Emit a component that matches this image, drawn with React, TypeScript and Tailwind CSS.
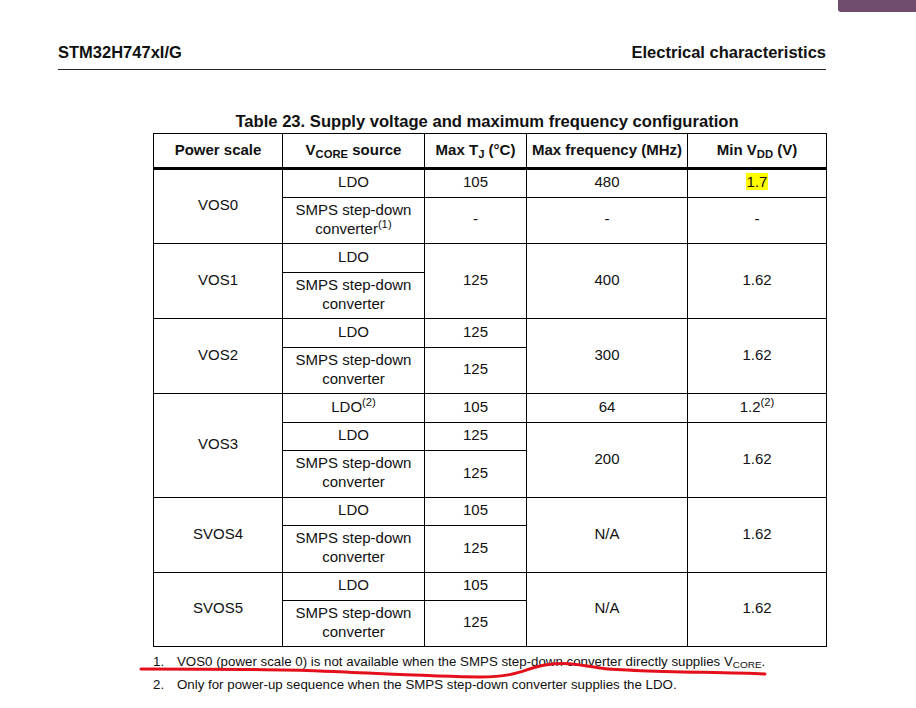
import React from 'react';

type Cell = {
  text: React.ReactNode;
  span?: string;
};

// body cells in row-major order, the grid auto-places them around the row spans
const bodyCells: Cell[] = [
  { text: 'VOS0', span: 'row-span-2' },
  { text: 'LDO' },
  { text: '105' },
  { text: '480' },
  { text: <span className="bg-[#ffff00] px-px">1.7</span> },
  { text: <>SMPS step-down<br />converter<sup>(1)</sup></> },
  { text: '-' },
  { text: '-' },
  { text: '-' },

  { text: 'VOS1', span: 'row-span-2' },
  { text: 'LDO' },
  { text: '125', span: 'row-span-2' },
  { text: '400', span: 'row-span-2' },
  { text: '1.62', span: 'row-span-2' },
  { text: <>SMPS step-down<br />converter</> },

  { text: 'VOS2', span: 'row-span-2' },
  { text: 'LDO' },
  { text: '125' },
  { text: '300', span: 'row-span-2' },
  { text: '1.62', span: 'row-span-2' },
  { text: <>SMPS step-down<br />converter</> },
  { text: '125' },

  { text: 'VOS3', span: 'row-span-3' },
  { text: <>LDO<sup>(2)</sup></> },
  { text: '105' },
  { text: '64' },
  { text: <>1.2<sup>(2)</sup></> },
  { text: 'LDO' },
  { text: '125' },
  { text: '200', span: 'row-span-2' },
  { text: '1.62', span: 'row-span-2' },
  { text: <>SMPS step-down<br />converter</> },
  { text: '125' },

  { text: 'SVOS4', span: 'row-span-2' },
  { text: 'LDO' },
  { text: '105' },
  { text: 'N/A', span: 'row-span-2' },
  { text: '1.62', span: 'row-span-2' },
  { text: <>SMPS step-down<br />converter</> },
  { text: '125' },

  { text: 'SVOS5', span: 'row-span-2' },
  { text: 'LDO' },
  { text: '105' },
  { text: 'N/A', span: 'row-span-2' },
  { text: '1.62', span: 'row-span-2' },
  { text: <>SMPS step-down<br />converter</> },
  { text: '125' },
];

const headers: React.ReactNode[] = [
  'Power scale',
  <>V<sub>CORE</sub> source</>,
  <>Max T<sub>J</sub> (°C)</>,
  'Max frequency (MHz)',
  <>Min V<sub>DD</sub> (V)</>,
];

export default function App() {
  return (
    <div className="relative w-[916px] h-[708px] overflow-hidden bg-white text-[#111] font-['Liberation_Sans',Arial,sans-serif]">
      {/* viewer tab */}
      <div className="flex justify-end">
        <div className="w-[78px] h-[12px] bg-[#6f4b6d] rounded-bl-[3px]" />
      </div>

      <div className="pl-[58px] w-[827px]">
        {/* Page header */}
        <div className="mt-[30px] flex justify-between items-center pb-[7px] border-b border-[#222] w-[768px] text-[16.5px] leading-[20px] font-bold">
          <span>STM32H747xI/G</span>
          <span>Electrical characteristics</span>
        </div>

        <div className="ml-[95px] w-[674px]">
          <div className="mt-[42px] h-[21px] pr-[6px] text-center text-[16.6px] leading-[20px] font-bold whitespace-nowrap">
            Table 23. Supply voltage and maximum frequency configuration
          </div>

          {/* Header row */}
          <div className="grid grid-cols-[128px_141px_101px_160px_138px] grid-rows-[33px] gap-px bg-black pt-px px-px pb-[3px]">
            {headers.map((h, i) => (
              <div key={i} className="bg-white flex items-center justify-center pb-[2px] text-[15px] leading-[19px] font-bold">
                <span>{h}</span>
              </div>
            ))}
          </div>

          {/* Body */}
          <div className="grid grid-cols-[128px_141px_101px_160px_138px] grid-rows-[27px_45px_28px_45px_28px_45px_28px_27px_46px_27px_46px_27px_45px] gap-px bg-black px-px pb-px">
            {bodyCells.map((c, i) => (
              <div key={i} className={`bg-white flex items-center justify-center text-center pb-[4px] text-[15px] leading-[19px] ${c.span ?? ''}`}>
                <span>{c.text}</span>
              </div>
            ))}
          </div>
        </div>

        {/* Footnotes */}
        <div className="ml-[95px] mt-[3px] text-[13.3px] leading-[23px] whitespace-nowrap">
          <div className="flex">
            <span className="w-[24px]">1.</span>
            <span>VOS0 (power scale 0) is not available when the SMPS step-down converter directly supplies V<sub>CORE</sub>.</span>
          </div>
          <div className="flex">
            <span className="w-[24px]">2.</span>
            <span>Only for power-up sequence when the SMPS step-down converter supplies the LDO.</span>
          </div>
        </div>
      </div>

      {/* hand-drawn red underline */}
      <svg className="absolute inset-0 pointer-events-none" width="916" height="708" viewBox="0 0 916 708">
        <path
          d="M141 669 C 200 669, 270 669, 320 671 S 440 677, 480 677 S 525 668, 545 665 S 575 664, 600 668 S 720 672, 765 674"
          fill="none"
          stroke="#e3101b"
          strokeWidth="3"
          strokeLinecap="round"
        />
      </svg>
    </div>
  );
}
